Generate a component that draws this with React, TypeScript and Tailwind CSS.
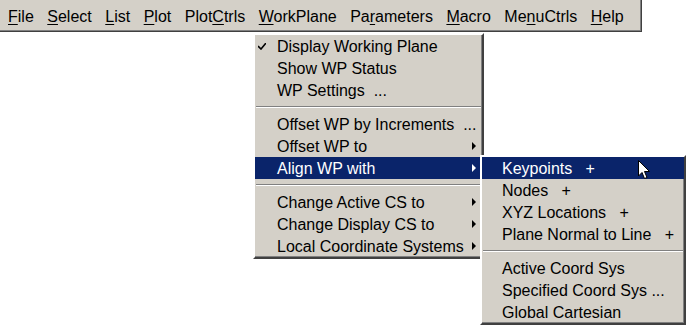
import React from "react";

const bevel =
  "border-2 border-t-[#ffffff] border-l-[#ffffff] border-b-[#404040] border-r-[#404040] shadow-[inset_-1px_-1px_0_#808080]";

const topItems: { label: string; key: number }[] = [
  { label: "File", key: 0 },
  { label: "Select", key: 0 },
  { label: "List", key: 0 },
  { label: "Plot", key: 0 },
  { label: "PlotCtrls", key: 4 },
  { label: "WorkPlane", key: 0 },
  { label: "Parameters", key: 2 },
  { label: "Macro", key: 0 },
  { label: "MenuCtrls", key: 2 },
  { label: "Help", key: 0 },
];

type Row =
  | { sep: true }
  | { sep?: false; label: string; check?: boolean; arrow?: boolean; active?: boolean };

const workPlane: Row[] = [
  { label: "Display Working Plane", check: true },
  { label: "Show WP Status" },
  { label: "WP Settings  ..." },
  { sep: true },
  { label: "Offset WP by Increments  ..." },
  { label: "Offset WP to", arrow: true },
  { label: "Align WP with", arrow: true, active: true },
  { sep: true },
  { label: "Change Active CS to", arrow: true },
  { label: "Change Display CS to", arrow: true },
  { label: "Local Coordinate Systems", arrow: true },
];

const alignWith: Row[] = [
  { label: "Keypoints   +", active: true },
  { label: "Nodes   +" },
  { label: "XYZ Locations   +" },
  { label: "Plane Normal to Line   +" },
  { sep: true },
  { label: "Active Coord Sys" },
  { label: "Specified Coord Sys ..." },
  { label: "Global Cartesian" },
];

const MenuRows = ({ rows, pad }: { rows: Row[]; pad: string }) => (
  <div className="flex flex-col">
    {rows.map((r, i) =>
      r.sep ? (
        <div key={i} className="h-[12px] flex items-center px-[1px]">
          <div className="w-full h-[2px] border-t border-t-[#808080] border-b border-b-[#ffffff]" />
        </div>
      ) : (
        <div
          key={i}
          className={`relative h-[22px] flex items-center pt-[2px] whitespace-pre ${pad} ${
            r.active ? "bg-[#0a246a] text-white" : "text-black"
          }`}
        >
          {r.check && (
            <svg className="absolute left-[3px] top-[8px]" width="8" height="7" viewBox="0 0 8 7">
              <path d="M0 3 L3 6 L8 0" stroke={r.active ? "#fff" : "#000"} strokeWidth="1.6" fill="none" />
            </svg>
          )}
          <span>{r.label}</span>
          {r.arrow && (
            <svg className="absolute right-[6px] top-[7px]" width="4" height="8" viewBox="0 0 4 8">
              <path d="M0 0 L4 4 L0 8 Z" fill={r.active ? "#fff" : "#000"} />
            </svg>
          )}
        </div>
      )
    )}
  </div>
);

export default function App() {
  return (
    <div
      className="relative w-[686px] h-[326px] bg-white overflow-hidden text-[16px] leading-none"
      style={{ fontFamily: '"Liberation Sans", Arial, sans-serif' }}
    >
      {/* Menu bar */}
      <div className="w-[642px] h-[32px] bg-[#d4d0c8] border-b border-r border-[#404040] shadow-[inset_-1px_-1px_0_#808080] flex items-center pl-[8px] pt-[2px] gap-[13.5px] text-black">
        {topItems.map((t) => (
          <span key={t.label} className="whitespace-pre">
            {t.label.slice(0, t.key)}
            <span className="underline underline-offset-2">{t.label[t.key]}</span>
            {t.label.slice(t.key + 1)}
          </span>
        ))}
      </div>

      {/* WorkPlane dropdown */}
      <div className={`absolute left-[253px] top-[33px] w-[231px] bg-[#d4d0c8] ${bevel}`}>
        <MenuRows rows={workPlane} pad="pl-[22px] pr-[1px]" />
      </div>

      {/* Align WP with submenu */}
      <div className={`absolute left-[480px] top-[155px] w-[206px] bg-[#d4d0c8] ${bevel}`}>
        <MenuRows rows={alignWith} pad="pl-[20px]" />
      </div>

      {/* Mouse pointer */}
      <svg className="absolute left-[638px] top-[160px]" width="13" height="21" viewBox="0 0 13 21">
        <path
          d="M0.5 0.5 L0.5 16 L4 12.5 L6.5 18.5 L9 17.5 L6.5 11.5 L11.5 11.5 Z"
          fill="#fff"
          stroke="#000"
          strokeWidth="1"
          strokeLinejoin="miter"
        />
      </svg>
    </div>
  );
}
